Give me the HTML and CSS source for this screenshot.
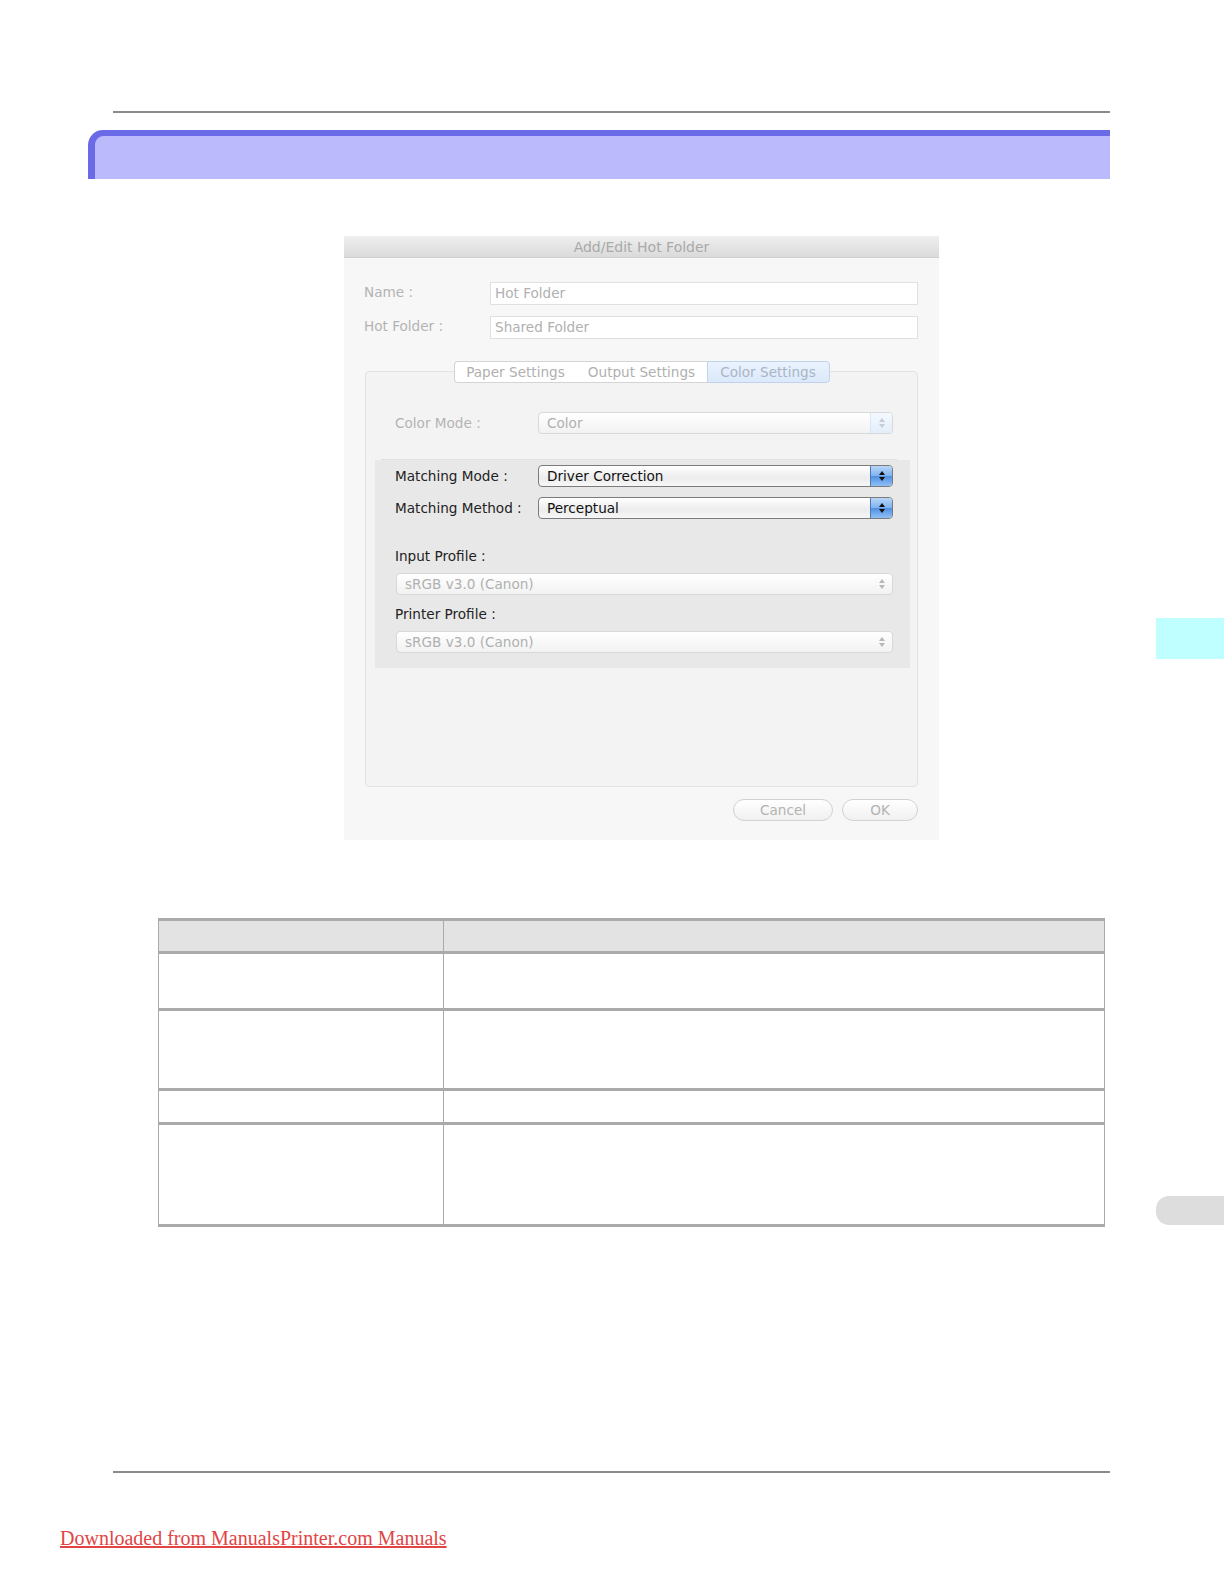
FILE: index.html
```html
<!DOCTYPE html>
<html>
<head>
<meta charset="utf-8">
<title>Add/Edit Hot Folder</title>
<link rel="stylesheet" href="styles.css">
</head>
<body>
<div class="page">
  <div class="rule rule-top"></div>
  <div class="section-head"></div>

  <div class="dialog">
    <div class="titlebar">Add/Edit Hot Folder</div>
    <div class="dlg-body">
      <div class="field-row">
        <span class="flabel">Name :</span>
        <div class="textbox">Hot Folder</div>
      </div>
      <div class="field-row">
        <span class="flabel">Hot Folder :</span>
        <div class="textbox">Shared Folder</div>
      </div>

      <div class="tabbox">
        <div class="tabs">
          <span class="tab t1">Paper Settings</span>
          <span class="tab t2">Output Settings</span>
          <span class="tab t3 sel">Color Settings</span>
        </div>
        <div class="group">
          <div class="prow colormode">
            <span class="plabel dis">Color Mode :</span>
            <div class="popup dis tint"><span class="pval">Color</span>
              <span class="stepper"><svg width="8" height="12" viewBox="0 0 8 12"><path d="M4 1 L7 5 H1 Z M4 11 L7 7 H1 Z"/></svg></span>
            </div>
          </div>
          <div class="sep"></div>
          <div class="matching">
            <div class="prow">
              <span class="plabel">Matching Mode :</span>
              <div class="popup on"><span class="pval">Driver Correction</span>
                <span class="stepper"><svg width="8" height="12" viewBox="0 0 8 12"><path d="M4 1 L7 5 H1 Z M4 11 L7 7 H1 Z"/></svg></span>
              </div>
            </div>
            <div class="prow">
              <span class="plabel">Matching Method :</span>
              <div class="popup on"><span class="pval">Perceptual</span>
                <span class="stepper"><svg width="8" height="12" viewBox="0 0 8 12"><path d="M4 1 L7 5 H1 Z M4 11 L7 7 H1 Z"/></svg></span>
              </div>
            </div>
            <div class="slabel first">Input Profile :</div>
            <div class="popup dis wide"><span class="pval">sRGB v3.0 (Canon)</span>
              <span class="stepper"><svg width="8" height="12" viewBox="0 0 8 12"><path d="M4 1 L7 5 H1 Z M4 11 L7 7 H1 Z"/></svg></span>
            </div>
            <div class="slabel">Printer Profile :</div>
            <div class="popup dis wide"><span class="pval">sRGB v3.0 (Canon)</span>
              <span class="stepper"><svg width="8" height="12" viewBox="0 0 8 12"><path d="M4 1 L7 5 H1 Z M4 11 L7 7 H1 Z"/></svg></span>
            </div>
          </div>
        </div>
      </div>

      <div class="buttons">
        <span class="btn cancel">Cancel</span>
        <span class="btn ok">OK</span>
      </div>
    </div>
  </div>

  <table class="spec">
    <tr class="hrow"><th class="c1"></th><th class="c2"></th></tr>
    <tr class="r1"><td></td><td></td></tr>
    <tr class="r2"><td></td><td></td></tr>
    <tr class="r3"><td></td><td></td></tr>
    <tr class="r4"><td></td><td></td></tr>
  </table>

  <div class="rule rule-bottom"></div>
  <a class="dl-link" href="#">Downloaded from ManualsPrinter.com Manuals</a>

  <div class="side-tab cyan"></div>
  <div class="side-tab grey"></div>
</div>
</body>
</html>
```

FILE: styles.css
```css
html, body {
  margin: 0;
  padding: 0;
  background: #ffffff;
}

.page {
  position: relative;
  width: 1224px;
  height: 1584px;
  overflow: hidden;
  font-family: "DejaVu Sans", "Liberation Sans", sans-serif;
}

.rule {
  height: 2px;
  background: #8a8a8a;
  margin-left: 113px;
  width: 997px;
}
.rule-top { margin-top: 111px; }
.rule-bottom { margin-top: 244px; }

.section-head {
  margin-top: 17px;
  margin-left: 88px;
  width: 1022px;
  height: 49px;
  box-sizing: border-box;
  background: #babafc;
  border-top: 6px solid #6b6be8;
  border-left: 7px solid #6b6be8;
  border-top-left-radius: 15px;
}

/* ---------- dialog ---------- */
.dialog {
  margin-top: 57px;
  margin-left: 344px;
  width: 595px;
  height: 604px;
  background: #f7f7f7;
  box-sizing: border-box;
}

.titlebar {
  height: 22px;
  line-height: 22px;
  text-align: center;
  font-size: 14px;
  color: #a9a9a9;
  background: linear-gradient(#efefef, #dadada);
  border-bottom: 1px solid #cfcfcf;
  box-sizing: border-box;
}

.dlg-body {
  padding: 24px 21px 0 20px;
  font-size: 13.6px;
}

.field-row {
  display: flex;
  align-items: center;
  height: 23px;
  margin-bottom: 11px;
}
.flabel {
  width: 126px;
  color: #b3b3b3;
  position: relative;
  top: -2px;
}
.textbox {
  flex: 1;
  height: 23px;
  box-sizing: border-box;
  border: 1px solid #e0e0e0;
  background: #ffffff;
  color: #b0b0b0;
  line-height: 21px;
  padding-left: 4px;
}

.tabbox {
  margin-top: 22px;
  margin-left: 1px;
}
.tabs {
  display: flex;
  justify-content: center;
  position: relative;
  z-index: 1;
  margin-bottom: -12px;
}
.tab {
  height: 22px;
  line-height: 20px;
  box-sizing: border-box;
  text-align: center;
  color: #b0b0b0;
  background: #ffffff;
  border-top: 1px solid #d4d4d4;
  border-bottom: 1px solid #d4d4d4;
}
.tab.t1 {
  width: 123px;
  border-left: 1px solid #d4d4d4;
  border-radius: 4px 0 0 4px;
}
.tab.t2 { width: 130px; }
.tab.t3 { width: 123px; }
.tab.sel {
  background: linear-gradient(#eaf3fe, #dbe9fa);
  border: 1px solid #bfd3ea;
  border-radius: 0 4px 4px 0;
  color: #a9b5c4;
}

.group {
  height: 416px;
  box-sizing: border-box;
  border: 1px solid #e2e2e2;
  border-radius: 4px;
  background: #f3f3f3;
  padding-top: 40px;
}

.prow {
  display: flex;
  align-items: center;
  height: 22px;
}
.colormode {
  padding-left: 29px;
}
.plabel {
  width: 143px;
  color: #222222;
}
.plabel.dis { color: #b3b3b3; }

.popup {
  position: relative;
  width: 355px;
  height: 22px;
  box-sizing: border-box;
  border-radius: 4px;
  line-height: 20px;
  padding-left: 8px;
}
.popup.on {
  border: 1px solid #7b7b7b;
  background: linear-gradient(#ffffff, #ececec 60%, #f7f7f7);
  color: #111111;
}
.popup.dis {
  border: 1px solid #d8d8d8;
  background: linear-gradient(#ffffff, #f2f2f2);
  color: #b0b0b0;
}
.popup.wide {
  width: 497px;
  margin-left: 1px;
}

.stepper {
  position: absolute;
  right: 0;
  top: 0;
  bottom: 0;
  width: 21px;
  display: flex;
  align-items: center;
  justify-content: center;
  border-radius: 0 3px 3px 0;
}
.stepper svg { fill: #b8b8b8; }
.popup.on .stepper {
  background: linear-gradient(#b8d6f8, #7fb1ee 50%, #4f90e3 51%, #8fc0f5);
  border-left: 1px solid #4d79b3;
}
.popup.on .stepper svg { fill: #111111; }
.popup.tint .stepper {
  background: linear-gradient(#f3f8fe, #e2eefb);
  border-left: 1px solid #dbe6f2;
}
.popup.tint .stepper svg { fill: #c4ccd6; }

.sep {
  height: 1px;
  background: #e1e1e1;
  margin: 25px 20px 0 15px;
}

.matching {
  margin: 0 7px 0 9px;
  height: 208px;
  box-sizing: border-box;
  background: #e8e8e8;
  padding: 5px 0 0 20px;
}
.matching .prow { margin-bottom: 10px; }

.slabel {
  color: #222222;
  height: 16px;
  line-height: 16px;
  margin-top: 11px;
  margin-bottom: 9px;
}
.slabel.first { margin-top: 29px; }

.buttons {
  display: flex;
  justify-content: flex-end;
  gap: 9px;
  margin-top: 12px;
}
.btn {
  height: 22px;
  box-sizing: border-box;
  border: 1px solid #d2d2d2;
  border-radius: 11px;
  background: linear-gradient(#ffffff, #f0f0f0);
  color: #b3b3b3;
  line-height: 20px;
  text-align: center;
}
.btn.cancel { width: 100px; }
.btn.ok { width: 76px; }

/* ---------- table ---------- */
.spec {
  margin-top: 78px;
  margin-left: 158px;
  width: 947px;
  border-collapse: collapse;
  table-layout: fixed;
}
.spec th, .spec td {
  border-left: 1px solid #aaaaaa;
  border-right: 1px solid #aaaaaa;
  border-top: 3px solid #aaaaaa;
  border-bottom: 3px solid #aaaaaa;
  padding: 0;
}
.spec .c1 { width: 284px; }
.hrow th { background: #e3e3e3; height: 30px; }
.r1 td { height: 54px; }
.r2 td { height: 77px; }
.r3 td { height: 31px; }
.r4 td { height: 99px; }

/* ---------- footer link ---------- */
.dl-link {
  display: block;
  margin-top: 53px;
  margin-left: 60px;
  width: max-content;
  font-family: "Liberation Serif", "Times New Roman", serif;
  font-size: 20px;
  line-height: 24px;
  color: #e24444;
  text-decoration: underline;
}

/* ---------- thumb index tabs on page edge ---------- */
.side-tab {
  position: absolute;
  left: 1156px;
  right: 0;
}
.side-tab.cyan {
  top: 618px;
  height: 41px;
  background: #bfffff;
}
.side-tab.grey {
  top: 1196px;
  height: 29px;
  background: #dddddd;
  border-radius: 13px 0 0 13px;
}
```
